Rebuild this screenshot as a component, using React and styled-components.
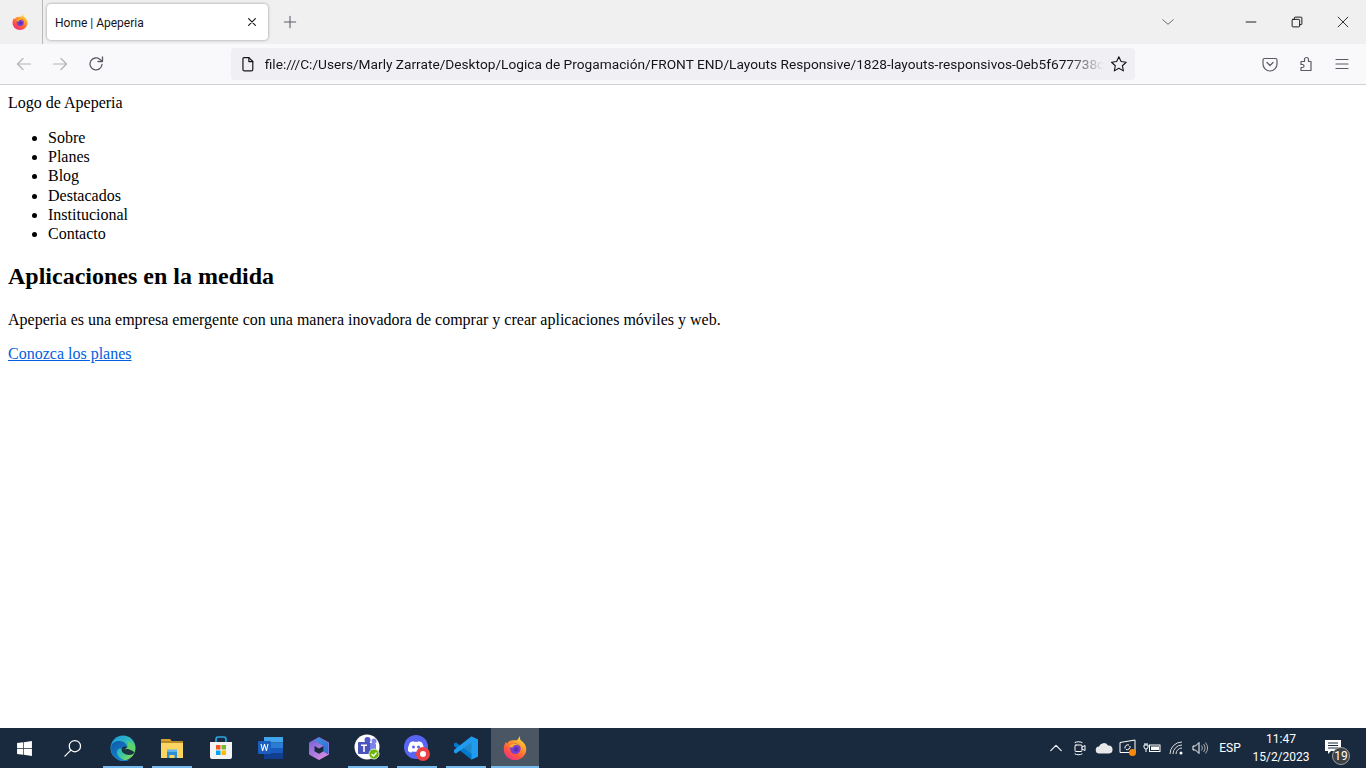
import { useId } from "react";
import styled, { createGlobalStyle } from "styled-components";
import { FaWindows } from "react-icons/fa";

const GlobalStyle = createGlobalStyle`
  html, body { margin: 0; padding: 0; height: 100%; overflow: hidden; background: #fff; }
`;

const Shell = styled.div`
  display: flex;
  flex-direction: column;
  height: 100vh;
  font-family: Roboto, "Open Sans", sans-serif;
`;

const TabStrip = styled.div`
  display: flex;
  align-items: stretch;
  height: 44px;
  background: #f0f0f0;
  flex: none;
`;
const AppCorner = styled.div`
  width: 43px;
  display: flex;
  align-items: center;
  justify-content: center;
  padding-right: 3px;
  box-sizing: border-box;
  border-right: 1px solid #b9b9bc;
`;
const Tab = styled.div`
  width: 221px;
  height: 36px;
  margin: 4px 0 0 4px;
  padding: 0 10px 0 8px;
  box-sizing: border-box;
  background: #fff;
  border-radius: 4px;
  box-shadow: 0 0 3px rgba(0, 0, 0, 0.4);
  display: flex;
  align-items: center;
  justify-content: space-between;
  font-size: 12px;
  color: #15141a;
`;
const TabTitle = styled.span`
  padding-top: 2px;
`;
const StripButton = styled.div`
  width: ${(p) => p.$w || 46}px;
  margin-left: ${(p) => p.$ml || 0}px;
  display: flex;
  align-items: center;
  justify-content: center;
  color: ${(p) => (p.$dark ? "#1a1a1a" : "#5b5b66")};
`;
const Spacer = styled.div`
  flex: 1;
`;

const Toolbar = styled.div`
  display: flex;
  align-items: center;
  height: 40px;
  flex: none;
  background: #f9f9fb;
  border-bottom: 1px solid #cfcfd8;
`;
const NavButton = styled.div`
  width: 36px;
  height: 36px;
  display: flex;
  align-items: center;
  justify-content: center;
  color: ${(p) => (p.$off ? "#b4b4b8" : "#5b5b66")};
`;
const NavGroup = styled.div`
  display: flex;
  padding-left: 6px;
  width: 231px;
  box-sizing: border-box;
`;
const UrlBar = styled.div`
  width: 904px;
  height: 32px;
  display: flex;
  align-items: center;
  background: #f0f0f4;
  border-radius: 4px;
  padding: 0 7px 0 9px;
  box-sizing: border-box;
  font-size: 13.7px;
  color: #15141a;
`;
const UrlText = styled.div`
  flex: 1;
  margin: 0 6px 0 9px;
  white-space: nowrap;
  -webkit-mask-image: linear-gradient(to left, transparent 0, #000 36px);
  mask-image: linear-gradient(to left, transparent 0, #000 36px);
`;
const RightTools = styled.div`
  display: flex;
  margin-left: auto;
  padding-right: 6px;
`;

const Page = styled.main`
  flex: 1;
  padding: 9px 8px 8px;
  background: #fff;
  color: #000;
  font-family: "Liberation Serif", "Times New Roman", serif;
  font-size: 16px;
  overflow: hidden;

  h1 {
    font-size: 24px;
    margin: 0 0 21px;
    line-height: 28px;
  }
  ul {
    margin: 16px 0 19px;
    padding-left: 40px;
    line-height: 19.2px;
  }
  p {
    margin: 0 0 16px;
    line-height: 18px;
  }
  a {
    color: #0060df;
  }
`;

const Taskbar = styled.footer`
  display: flex;
  align-items: center;
  height: 40px;
  flex: none;
  background: #1a2a3e;
  color: #fff;
  font-size: 12px;
`;
const TaskCell = styled.div`
  width: ${(p) => p.$w || 48}px;
  height: 40px;
  flex: none;
  display: flex;
  align-items: center;
  justify-content: center;
`;
const AppButton = styled.div`
  position: relative;
  width: ${(p) => (p.$active ? 48 : 49)}px;
  margin-left: ${(p) => (p.$active ? 0.5 : 0)}px;
  height: 40px;
  flex: none;
  display: flex;
  align-items: center;
  justify-content: center;
  background: ${(p) => (p.$active ? "#4a5663" : "transparent")};

  &::after {
    content: "";
    display: ${(p) => (p.$running ? "block" : "none")};
    position: absolute;
    bottom: 0;
    left: ${(p) => (p.$active ? 0 : 4.5)}px;
    right: ${(p) => (p.$active ? 0 : 4.5)}px;
    height: 2px;
    background: #76b9ed;
  }
`;
const Tray = styled.div`
  display: flex;
  align-items: center;
  margin-left: auto;
  padding-right: 14px;
`;
const TrayCell = styled.div`
  width: ${(p) => p.$w || 24}px;
  height: 40px;
  display: flex;
  flex-direction: column;
  align-items: center;
  justify-content: center;
  line-height: 18px;
  position: relative;
`;
const NoteIcon = styled.svg`
  margin-top: -2px;
`;
const Badge = styled.span`
  position: absolute;
  right: 2px;
  bottom: 3px;
  width: 18px;
  height: 18px;
  border-radius: 50%;
  background: #3d4144;
  border: 1px solid #9a9da0;
  box-sizing: border-box;
  font-size: 12px;
  line-height: 16px;
  text-align: center;
`;

const Line = ({ size = 16, sw = 1.2, children, fill = "none" }) => (
  <svg width={size} height={size} viewBox="0 0 16 16" fill={fill} stroke="currentColor" strokeWidth={sw} strokeLinecap="round" strokeLinejoin="round">
    {children}
  </svg>
);

function FirefoxLogo({ size }) {
  const id = useId();
  return (
    <svg width={size} height={size} viewBox="0 0 32 32">
      <defs>
        <linearGradient id={id + "a"} x1="0.8" y1="0.05" x2="0.25" y2="0.95">
          <stop offset="0" stopColor="#ffe03b" />
          <stop offset="0.35" stopColor="#ff9a2b" />
          <stop offset="0.7" stopColor="#ff5a3c" />
          <stop offset="1" stopColor="#f5317f" />
        </linearGradient>
      </defs>
      <path d="M22 0c1 3 .5 4.500 2 6 3.500 2.500 7 6 7 11.500C31 25.500 24.300 32 16 32S1 25.500 1 17.500c0-3.500 1-7 3-9.500.6 1.200 1 1.800 1.800 2.300C6.500 7.500 9.500 5.500 13 5.500c3 0 5 .5 6.500-1C20.700 3.500 21.500 2 22 0z" fill={`url(#${id}a)`} />
      <circle cx="16.500" cy="17" r="7" fill="#7a3fd0" />
      <path d="M8.500 13.500c3.500-4.500 11-4.500 14 .5-2.500-2-6-2.500-8.500-1-1 .6-.5 1.500.5 1.800-1.800.8-4.500.2-6-1.300z" fill="#ffb02e" />
      <circle cx="17.500" cy="18" r="3" fill="#5b2fb5" />
    </svg>
  );
}

const Edge = () => (
  <svg width="26" height="26" viewBox="0 0 26 26">
    <defs>
      <linearGradient id="edgeA" x1="0.2" y1="0" x2="1" y2="0.7">
        <stop offset="0" stopColor="#1b9de2" />
        <stop offset="0.6" stopColor="#35c1b0" />
        <stop offset="1" stopColor="#7ddc5a" />
      </linearGradient>
      <linearGradient id="edgeB" x1="0" y1="0" x2="0.6" y2="1">
        <stop offset="0" stopColor="#0c59a4" />
        <stop offset="1" stopColor="#1a87d6" />
      </linearGradient>
    </defs>
    <circle cx="13" cy="13" r="12.500" fill="url(#edgeA)" />
    <path d="M1 13C1 8 5 6 9 6c5 0 8 3 8 6 0 1.500-1 2.500-3 2.500-3-2-7-1-7 3 0 3 3 6 7 7.500 2 .5 5 0 7-1.500-2 2-5 3-8 3C6 25.500 1 20 1 13z" fill="url(#edgeB)" />
    <path d="M12 13c2-2 7-2 9.500 1 1.500 2 2 3 3 3-.5 2-2.500 3-5.500 3-4 0-9-3-7-7z" fill="#1a2a3e" opacity="0.95" />
    <path d="M14 14.500c1.500-1 5-1 9 1.500.5.300 1.500.500 1.500 0 .5-4-2-9-8-10 3 2 2 7-2.500 8.500z" fill="#5fd36a" />
  </svg>
);

const Explorer = () => (
  <svg width="24" height="22" viewBox="0 0 24 22">
    <path d="M1 2h9l2 2.500H1z" fill="#d9a22b" />
    <rect x="1" y="4" width="22" height="3" fill="#b78a2a" />
    <rect x="1" y="6" width="22" height="15" fill="#fcd462" />
    <path d="M7 21v-6h10v6h-2.500v-3h-5v3z" fill="#2c8fd6" />
    <rect x="7" y="12.500" width="10" height="2.500" fill="#5db4e8" />
  </svg>
);

const Store = () => (
  <svg width="24" height="24" viewBox="0 0 24 24">
    <path d="M7 6V3.500C7 2 8 1 9 1h6c1 0 2 1 2 2.500V6" fill="none" stroke="#2aa7e6" strokeWidth="1.600" />
    <path d="M1 6h22v15a2 2 0 0 1-2 2H3a2 2 0 0 1-2-2z" fill="#f4f4f4" />
    <rect x="7" y="9" width="4.500" height="4.500" fill="#f05a28" />
    <rect x="12.500" y="9" width="4.500" height="4.500" fill="#7cb82f" />
    <rect x="7" y="14.500" width="4.500" height="4.500" fill="#00a4ef" />
    <rect x="12.500" y="14.500" width="4.500" height="4.500" fill="#ffb900" />
  </svg>
);

const WordIcon = () => (
  <svg width="25" height="22" viewBox="0 0 25 22">
    <rect x="6" y="0" width="19" height="5.500" fill="#41a5ee" />
    <rect x="6" y="5.500" width="19" height="5.500" fill="#2b7cd3" />
    <rect x="6" y="11" width="19" height="5.500" fill="#185abd" />
    <rect x="6" y="16.500" width="19" height="5.500" fill="#103f91" />
    <rect x="0" y="4" width="13" height="13" rx="1" fill="#1a5ebf" />
    <path d="M2.500 7l1.600 7h1l1.400-5 1.400 5h1l1.600-7h-1.100l-1 5-1.400-5h-1l-1.400 5-1-5z" fill="#fff" />
  </svg>
);

const Office = () => (
  <svg width="20" height="23" viewBox="0 0 20 23">
    <defs>
      <linearGradient id="ofA" x1="0" y1="0" x2="1" y2="1">
        <stop offset="0" stopColor="#3f8fe0" />
        <stop offset="1" stopColor="#2d6fd0" />
      </linearGradient>
      <linearGradient id="ofB" x1="0" y1="0" x2="0.6" y2="1">
        <stop offset="0" stopColor="#6f5fd8" />
        <stop offset="1" stopColor="#cf8ae0" />
      </linearGradient>
    </defs>
    <path d="M10 1l9 5.200v10.600L10 22l-9-5.200V6.200z" fill="url(#ofB)" stroke="url(#ofB)" strokeWidth="2" strokeLinejoin="round" />
    <path d="M10 1l9 5.200v10.600l-4-2.300V9L6 3.300z" fill="url(#ofA)" stroke="url(#ofA)" strokeWidth="1" strokeLinejoin="round" />
    <path d="M5.500 9l4.500 2.600L14.500 9v5.200L10 16.800l-4.500-2.600z" fill="#1a2a3e" />
  </svg>
);

const Teams = () => (
  <svg width="28" height="28" viewBox="0 0 28 28">
    <circle cx="13" cy="13" r="12.500" fill="#fff" />
    <rect x="12" y="9" width="10" height="10" rx="1.500" fill="#7b83eb" />
    <circle cx="20" cy="7" r="2.500" fill="#7b83eb" />
    <circle cx="13.500" cy="6" r="3" fill="#5059c9" />
    <rect x="4" y="8" width="12" height="12" rx="1" fill="#4b53bc" />
    <path d="M7 10.500h6v1.500h-2.200v6h-1.600v-6H7z" fill="#fff" />
    <circle cx="20" cy="20" r="5" fill="#6bb700" stroke="#d8e6c4" />
    <path d="M17.500 20l2 2 3-3.500" fill="none" stroke="#fff" strokeWidth="1.300" />
  </svg>
);

const Discord = () => (
  <svg width="26" height="26" viewBox="0 0 26 26">
    <circle cx="12" cy="12" r="12" fill="#5865f2" />
    <path d="M6 7.500c2-1 3-1.300 3.500-1.300l.4.800c1.400-.2 2.800-.2 4.200 0l.4-.8c.5 0 1.500.3 3.500 1.300 1.500 3 2 5.500 1.800 8.500-1.500 1-2.700 1.500-3.800 1.700l-.8-1.300c-2.400.6-4.800.6-7.200 0l-.8 1.300C6.700 17.500 5.500 17 4 16c-.2-3 .5-5.500 2-8.500z" fill="#fff" />
    <circle cx="9.500" cy="12" r="1.500" fill="#5865f2" />
    <circle cx="14.500" cy="12" r="1.500" fill="#5865f2" />
    <circle cx="19" cy="19" r="7" fill="#ed4245" />
    <circle cx="19" cy="19" r="3" fill="#fff" />
  </svg>
);

const VsCode = () => (
  <svg width="24" height="24" viewBox="0 0 24 24">
    <path d="M17.500 0.500L24 3.500v17l-6.500 3L7 13.500l10.500-13z" fill="#2489ca" />
    <path d="M17.500 0.500L24 3.500v17l-6.500 3V6.500L9.500 12 7 13.500 4 11z" fill="#1f9cf0" />
    <path d="M0 7.500L2 6.500l15.500 11.500v5.500L0 10z" fill="#007acc" />
    <path d="M0 16.500l2 1L17.500 6V.5L0 14z" fill="#1f9cf0" />
  </svg>
);

function App() {
  return (
    <Shell>
      <GlobalStyle />
      <TabStrip>
        <AppCorner>
          <FirefoxLogo size={16} />
        </AppCorner>
        <Tab>
          <TabTitle>Home | Apeperia</TabTitle>
          <Line size={12} sw={1.5}>
            <path d="M3.500 3.500l9 9M12.500 3.500l-9 9" />
          </Line>
        </Tab>
        <StripButton $w={44}>
          <Line size={14} sw={1.2}>
            <path d="M8 1.500v13M1.500 8h13" />
          </Line>
        </StripButton>
        <Spacer />
        <StripButton $w={44}>
          <Line size={12} sw={1.2}>
            <path d="M1 5l7 6 7-6" />
          </Line>
        </StripButton>
        <StripButton $ml={38} $dark>
          <Line size={12} sw={1.3}>
            <path d="M1.500 8h13" />
          </Line>
        </StripButton>
        <StripButton $dark>
          <Line size={12} sw={1.3}>
            <rect x="1.500" y="4.500" width="10" height="10" rx="1" />
            <path d="M4.500 4.500v-2a1 1 0 0 1 1-1h8a1 1 0 0 1 1 1v8a1 1 0 0 1-1 1h-2" />
          </Line>
        </StripButton>
        <StripButton $dark>
          <Line size={12} sw={1.2}>
            <path d="M1.500 1.500l13 13M14.500 1.500l-13 13" />
          </Line>
        </StripButton>
      </TabStrip>

      <Toolbar>
        <NavGroup>
          <NavButton $off>
            <Line>
              <path d="M14.500 8h-13M7 2.500L1.500 8 7 13.500" />
            </Line>
          </NavButton>
          <NavButton $off>
            <Line>
              <path d="M1.500 8h13M9 2.500L14.500 8 9 13.500" />
            </Line>
          </NavButton>
          <NavButton>
            <Line sw={1.3}>
              <path d="M14 8.500A6 6 0 1 1 11.800 3.200L14 5" />
              <path d="M14.500 1v4.500H10" />
            </Line>
          </NavButton>
        </NavGroup>
        <UrlBar>
          <Line sw={1.2}>
            <path d="M3 2.500a1 1 0 0 1 1-1h5l4 4v8a1.500 1.500 0 0 1-1.500 1.500h-7A1.500 1.500 0 0 1 3 13.500z" />
            <path d="M9 1.500v4h4" />
          </Line>
          <UrlText>file:///C:/Users/Marly Zarrate/Desktop/Logica de Progamación/FRONT END/Layouts Responsive/1828-layouts-responsivos-0eb5f677738c</UrlText>
          <Line size={18} sw={1}>
            <path d="M8 1.500l2 4.300 4.600.6-3.400 3.200.9 4.600L8 11.900l-4.100 2.300.9-4.600L1.400 6.400 6 5.800z" />
          </Line>
        </UrlBar>
        <RightTools>
          <NavButton>
            <Line>
              <path d="M2.500 2.500h11A1.500 1.500 0 0 1 15 4v4a7 7 0 0 1-14 0V4a1.500 1.500 0 0 1 1.500-1.500z" />
              <path d="M5 6.500L8 9.500l3-3" />
            </Line>
          </NavButton>
          <NavButton>
            <Line>
              <path d="M3 14.500v-3h1.500a1.500 1.500 0 0 0 0-3H3v-3h3.500v-2a2 2 0 0 1 4 0v2H13v9z" />
            </Line>
          </NavButton>
          <NavButton>
            <Line>
              <path d="M2 3.500h12M2 8h12M2 12.500h12" />
            </Line>
          </NavButton>
        </RightTools>
      </Toolbar>

      <Page>
        <div>Logo de Apeperia</div>
        <ul>
          <li>Sobre</li>
          <li>Planes</li>
          <li>Blog</li>
          <li>Destacados</li>
          <li>Institucional</li>
          <li>Contacto</li>
        </ul>
        <h1>Aplicaciones en la medida</h1>
        <p>Apeperia es una empresa emergente con una manera inovadora de comprar y crear aplicaciones móviles y web.</p>
        <a href="#planes">Conozca los planes</a>
      </Page>

      <Taskbar>
        <TaskCell>
          <FaWindows size={17} />
        </TaskCell>
        <TaskCell $w={50.5}>
          <Line size={20} sw={1}>
            <circle cx="9.500" cy="6.500" r="4.500" />
            <path d="M6.300 9.700L1.500 14.500" />
          </Line>
        </TaskCell>
        <AppButton $running><Edge /></AppButton>
        <AppButton $running><Explorer /></AppButton>
        <AppButton><Store /></AppButton>
        <AppButton><WordIcon /></AppButton>
        <AppButton><Office /></AppButton>
        <AppButton $running><Teams /></AppButton>
        <AppButton $running><Discord /></AppButton>
        <AppButton $running><VsCode /></AppButton>
        <AppButton $running $active><FirefoxLogo size={24} /></AppButton>
        <Tray>
          <TrayCell>
            <Line size={14} sw={1.2}>
              <path d="M2 11l6-6 6 6" />
            </Line>
          </TrayCell>
          <TrayCell>
            <Line size={16} sw={1}>
              <rect x="3" y="5" width="7" height="6.500" rx="1" />
              <path d="M10 7l3-1.500v5L10 9M3 2.500c2-1 5-1 7 0M3 14c2 1 5 1 7 0" />
            </Line>
          </TrayCell>
          <TrayCell>
            <svg width="18" height="12" viewBox="0 0 18 12">
              <path d="M4.500 11.500a3.500 3.500 0 0 1-.5-7A5 5 0 0 1 13 3.500a4 4 0 0 1 1 8z" fill="#e8e8e8" />
            </svg>
          </TrayCell>
          <TrayCell>
            <svg width="18" height="18" viewBox="0 0 18 18" fill="none" stroke="#fff" strokeWidth="1">
              <path d="M1 3.500L16 1v12.500H1z" />
              <path d="M6 9.500a3 3 0 0 1 4-3.500M11 7a3 3 0 0 1-4 3.500" />
              <circle cx="13.500" cy="13.500" r="3.500" fill="#f7890b" stroke="none" />
            </svg>
          </TrayCell>
          <TrayCell>
            <svg width="18" height="12" viewBox="0 0 18 12" fill="none" stroke="#fff" strokeWidth="1">
              <rect x="6.500" y="3" width="10.500" height="6.500" />
              <rect x="8" y="4.500" width="8" height="3.500" fill="#fff" stroke="none" />
              <path d="M1 3h4v2a2 2 0 0 1-4 0zM2 1v2M4 1v2M3 7v3" />
            </svg>
          </TrayCell>
          <TrayCell $w={25}>
            <svg width="16" height="14" viewBox="0 0 16 14" fill="none" stroke="#ddd" strokeWidth="1">
              <path d="M1 13A12 12 0 0 1 13 1M4 13a9 9 0 0 1 9-9M7 13a6 6 0 0 1 6-6" />
              <circle cx="12" cy="12" r="1.500" fill="#fff" stroke="none" />
            </svg>
          </TrayCell>
          <TrayCell $w={23}>
            <svg width="17" height="14" viewBox="0 0 17 14" fill="none" stroke="#fff" strokeWidth="1">
              <path d="M1 5v4h2.500L7 12.500v-11L3.500 5z" />
              <path d="M9.500 4.500a4 4 0 0 1 0 5M11.500 3a6.500 6.500 0 0 1 0 8M13.500 1.500a9 9 0 0 1 0 11" stroke="#aaa" />
            </svg>
          </TrayCell>
          <TrayCell $w={36}>ESP</TrayCell>
          <TrayCell $w={66}>
            <span>11:47</span>
            <span>15/2/2023</span>
          </TrayCell>
          <TrayCell $w={38}>
            <NoteIcon width="16" height="14" viewBox="0 0 16 14">
              <path d="M0 0h16v11H6l-3 3v-3H0z" fill="#fff" />
              <path d="M3 3h10M3 5.500h10M3 8h10" stroke="#1a2a3e" />
            </NoteIcon>
            <Badge>19</Badge>
          </TrayCell>
        </Tray>
      </Taskbar>
    </Shell>
  );
}

export default App;
